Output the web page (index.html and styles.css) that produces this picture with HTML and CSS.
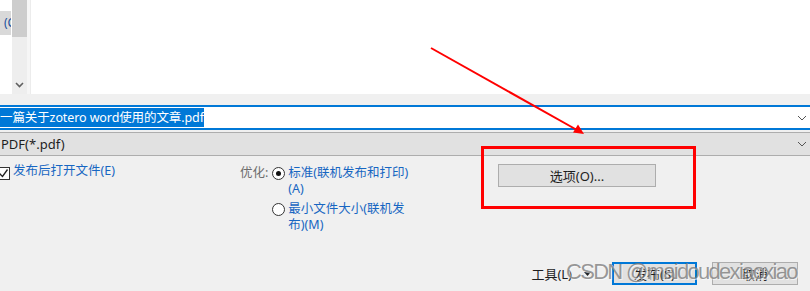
FILE: index.html
```html
<!DOCTYPE html>
<html lang="zh-CN">
<head>
    <meta charset="UTF-8">
    <title>发布为 PDF</title>
    <link rel="stylesheet" href="styles.css">
</head>
<body>
    <div class="browser">
        <div class="side-tab"><span>(C)</span></div>
        <div class="scrollbar">
            <div class="thumb"></div>
            <svg class="scroll-down" width="9" height="6" viewBox="0 0 9 6"><path d="M1 1l3.5 3.5L8 1" fill="none" stroke="#606060" stroke-width="1.6"/></svg>
        </div>
        <div class="pane-edge"></div>
        <div class="file-list"></div>
    </div>

    <div class="field filename">
        <span class="selected">一篇关于zotero word使用的文章.pdf</span>
        <svg class="chevron" width="10" height="6" viewBox="0 0 10 6"><path d="M1 1l4 4 4-4" fill="none" stroke="#555" stroke-width="1"/></svg>
    </div>
    <div class="field filetype">
        <span>PDF(*.pdf)</span>
        <svg class="chevron" width="10" height="6" viewBox="0 0 10 6"><path d="M1 1l4 4 4-4" fill="none" stroke="#555" stroke-width="1"/></svg>
    </div>

    <div class="options">
        <label class="open-after">
            <span class="checkbox">
                <svg width="11" height="11" viewBox="0 0 11 11"><path d="M1.5 5.5l3 3 5-7" fill="none" stroke="#222" stroke-width="1.3"/></svg>
            </span>
            发布后打开文件(E)
        </label>

        <div class="optimize">
            <span class="optimize-label">优化:</span>
            <div class="radio-list">
                <label class="radio-row">
                    <span class="radio checked"></span>
                    <span class="radio-text">标准(联机发布和打印)(A)</span>
                </label>
                <label class="radio-row">
                    <span class="radio"></span>
                    <span class="radio-text">最小文件大小(联机发布)(M)</span>
                </label>
            </div>
        </div>

        <button class="btn options-btn">选项(O)...</button>
    </div>

    <div class="footer">
        <span class="tools">工具(L)<svg width="7" height="4" viewBox="0 0 7 4"><path d="M0 0h7L3.5 4z" fill="#222"/></svg></span>
        <button class="btn primary">发布(S)</button>
        <button class="btn">取消</button>
    </div>

    <div class="highlight-box"></div>
    <svg class="arrow" width="810" height="291" viewBox="0 0 810 291">
        <line x1="431" y1="48" x2="577" y2="130" stroke="#f00" stroke-width="2"/>
        <path d="M584 134l-11-1.5 5-8z" fill="#f00"/>
    </svg>
    <div class="watermark">CSDN @maidoudexiaoxiao</div>
</body>
</html>
```

FILE: styles.css
```css
body {
    margin: 0;
    width: 810px;
    height: 291px;
    overflow: hidden;
    position: relative;
    background-color: #f0f0f0;
    font-family: "Noto Sans", "Noto Sans CJK SC", sans-serif;
    font-size: 12px;
    color: #1e1e1e;
}
.browser {
    display: flex;
    height: 94px;
    background-color: #fff;
}
.side-tab {
    width: 12px;
}
.side-tab span {
    display: block;
    margin-top: 11px;
    height: 24px;
    width: 11px;
    overflow: hidden;
    background-color: #d9d9d9;
    line-height: 24px;
    padding-left: 4px;
    box-sizing: border-box;
    color: #1a4f9c;
    white-space: nowrap;
}
.scrollbar {
    width: 15px;
    background-color: #eeeeee;
    display: flex;
    flex-direction: column;
    align-items: center;
}
.thumb {
    width: 15px;
    height: 37px;
    background-color: #cdcdcd;
}
.scroll-down {
    margin-top: auto;
    margin-bottom: 6px;
}
.pane-edge {
    width: 3px;
    background-color: #f6f6f6;
    border-right: 1px solid #ececec;
}
.file-list {
    flex: 1;
}
.field {
    display: flex;
    align-items: center;
    justify-content: space-between;
    padding-right: 3px;
    font-size: 13px;
}
.filename {
    margin-top: 11px;
    height: 21px;
    background-color: #fff;
    border-top: 2px solid #0078d7;
    border-bottom: 2px solid #0078d7;
}
.selected {
    background-color: #0078d7;
    color: #fff;
    line-height: 19px;
    font-size: 12.5px;
    letter-spacing: -0.1px;
}
.filetype {
    margin-top: 2px;
    height: 22px;
    background-color: #e1e1e1;
    border-top: 1px solid #adadad;
    border-bottom: 1px solid #adadad;
    padding-left: 1px;
}
.options {
    display: flex;
    height: 106px;
}
.open-after {
    width: 243px;
    display: flex;
    align-items: flex-start;
    gap: 3px;
    margin-left: -3px;
    padding-top: 7px;
    line-height: 16px;
    color: #1766c2;
    font-size: 12.5px;
}
.checkbox {
    width: 11px;
    height: 11px;
    border: 1px solid #333;
    background-color: #fff;
    margin-top: 4px;
    flex-shrink: 0;
}
.checkbox svg {
    display: block;
}
.optimize {
    width: 258px;
    display: flex;
    gap: 4px;
    padding-top: 9px;
    line-height: 16px;
}
.optimize-label {
    color: #6d6d6d;
    font-size: 12.5px;
}
.radio-list {
    display: flex;
    flex-direction: column;
    gap: 4px;
}
.radio-row {
    display: flex;
    align-items: flex-start;
    gap: 3px;
}
.radio {
    width: 11px;
    height: 11px;
    border: 1px solid #333;
    border-radius: 50%;
    background-color: #fff;
    margin-top: 2px;
    flex-shrink: 0;
    position: relative;
}
.radio.checked::after {
    content: "";
    position: absolute;
    left: 3px;
    top: 3px;
    width: 5px;
    height: 5px;
    border-radius: 50%;
    background-color: #111;
}
.radio-text {
    width: 124px;
    color: #1766c2;
    font-size: 12.5px;
}
.btn {
    font-family: inherit;
    font-size: 13px;
    color: #1e1e1e;
    background-color: #e1e1e1;
    border: 1px solid #adadad;
    padding: 0;
    height: 23px;
}
.options-btn {
    margin-top: 8px;
    width: 158px;
}
.footer {
    display: flex;
    justify-content: flex-end;
    align-items: center;
    gap: 15px;
    padding-right: 12px;
}
.footer .btn {
    width: 86px;
    height: 23px;
}
.footer .btn.primary {
    width: 85px;
    border: 2px solid #0078d7;
}
.tools {
    font-size: 13px;
    display: flex;
    align-items: center;
    gap: 12px;
    margin-right: 6px;
}
.highlight-box {
    position: absolute;
    left: 481px;
    top: 146px;
    width: 215px;
    height: 63px;
    border: 3px solid #f00;
    box-sizing: border-box;
}
.arrow {
    position: absolute;
    left: 0;
    top: 0;
    pointer-events: none;
}
.watermark {
    position: absolute;
    left: 566px;
    top: 259px;
    font-family: "Liberation Sans", sans-serif;
    font-size: 22px;
    line-height: 26px;
    letter-spacing: -1.7px;
    color: rgba(120, 120, 120, 0.75);
    text-shadow: 1px 1px 0 rgba(255, 255, 255, 0.6);
    white-space: nowrap;
}
```
